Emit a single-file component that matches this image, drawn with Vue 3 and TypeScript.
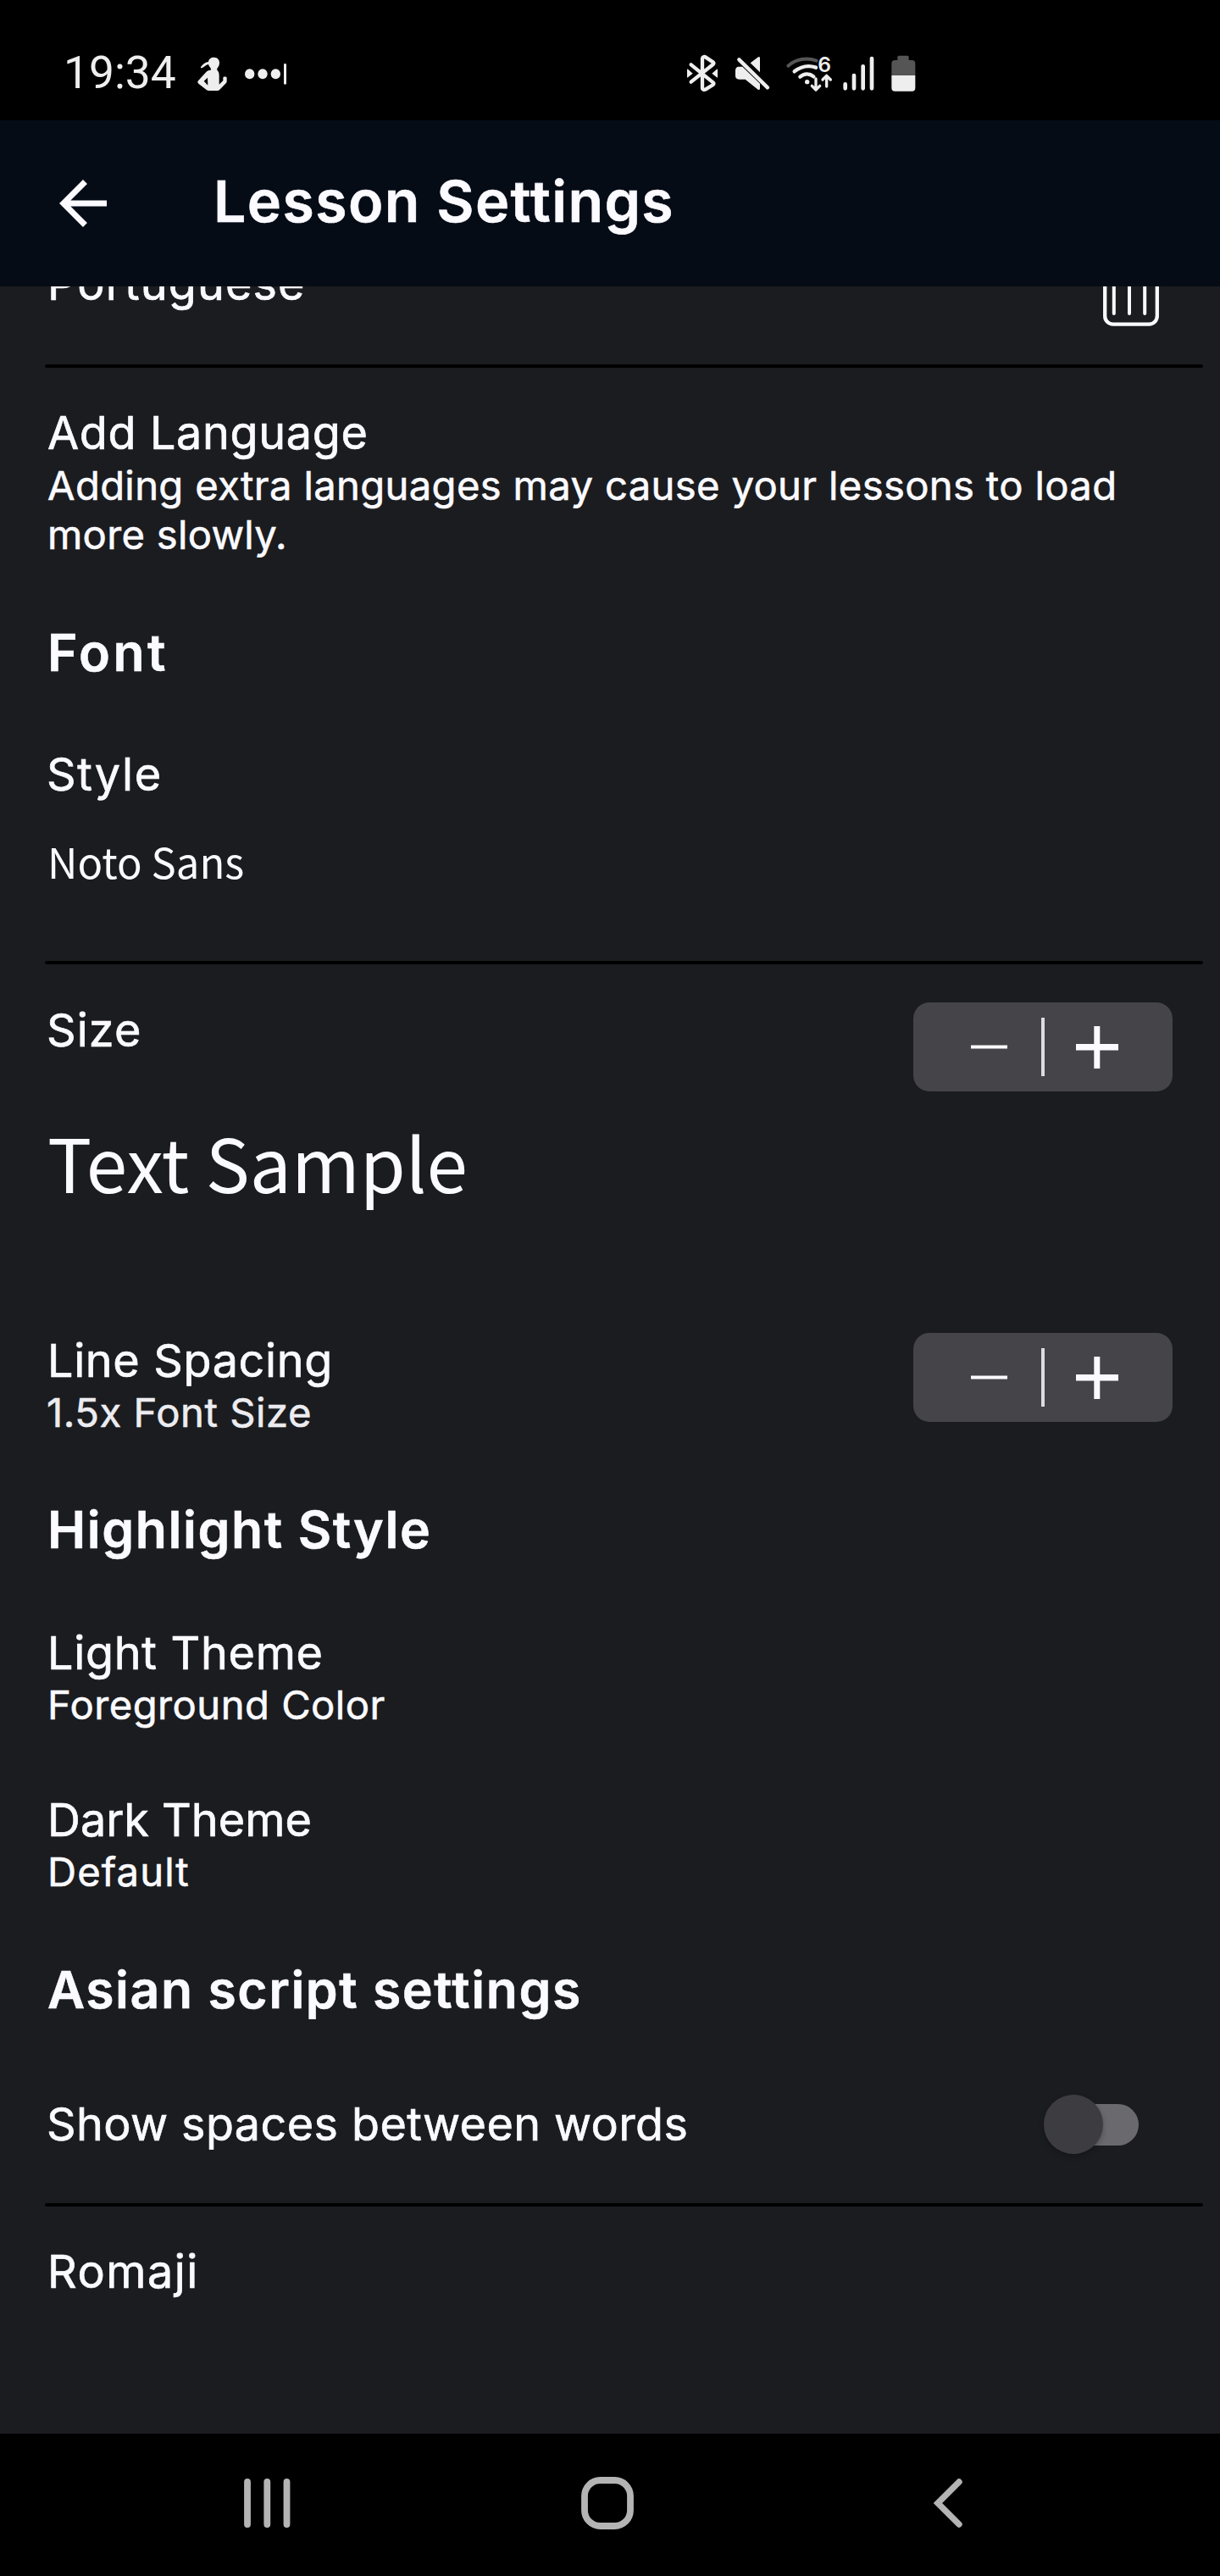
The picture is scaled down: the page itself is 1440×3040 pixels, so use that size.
<script setup lang="ts">
import { ref } from 'vue'

const showSpaces = ref(false)
const steppers = { size: 'Size', spacing: 'Line Spacing' }
</script>

<template>
  <div class="screen">
    <header class="status">
      <span class="time">19:34</span>
      <svg class="notif" viewBox="690 0 345 300" aria-hidden="true">
        <g fill="#eee">
          <path d="M757 83c12 0 20 8 20 19 0 8-3 14-7 19-2 3-2 6 0 9 5 4 6 11 6 19v30l14-14v-10c0-5 13-5 13 0v13c0 3-1 5-3 7l-22 22c-3 3-7 4-12 4h-22c-6 0-10-1-14-4l-27-21c-4-3-4-7-1-10l28-31c4-4 9-6 14-6 4-1 4-5 1-9-3-5-6-7-7-12-7-1-16 12-25 13-4 0-3-4 0-6 7-9 14-15 25-16 1-10 9-16 19-16z" />
          <ellipse cx="884" cy="142" rx="17" ry="18" />
          <ellipse cx="930" cy="142" rx="17" ry="18" />
          <ellipse cx="976" cy="142" rx="17" ry="18" />
          <rect x="1005" y="105" width="9" height="74" rx="4" />
        </g>
        <path d="M722 167l13-12 1 27z" fill="#000" />
      </svg>
      <svg class="system" viewBox="80 0 840 300" aria-hidden="true">
        <g fill="none" stroke="#eee" stroke-linecap="round" stroke-linejoin="round">
          <path d="M106 109l78 63c3 3 3 5 0 8l-26 16c-5 3-12 1-12-5V88c0-6 7-9 12-5l26 17c3 3 3 5 0 8l-78 62" stroke-width="13" />
          <path d="M276 91l101 99" stroke-width="13" />
          <path d="M472 133c22-17 50-23 76-14M492 152c15-13 33-13 48-1" stroke-width="13" />
          <path d="M450 113c27-24 65-31 100-18" stroke="#555" stroke-width="12" />
          <path d="M548 159v36M534 184l14 14 14-14" stroke-width="10" />
          <path d="M586 186v-36M572 162l14-14 14 14" stroke-width="10" />
          <path d="M652 178v15M683 147v46M715 115v78M746 87v106" stroke-width="14" />
        </g>
        <g fill="#eee">
          <path d="M92 127q-1-4 3-2l17 15-17 14q-4 2-3-2z" />
          <path d="M200 127q1-4-3-2l-17 15 17 14q4 2 3-2z" />
          <path d="M316 103l28-21q6-4 6 4v50z" />
          <path d="M275 116h13l62 60v17q0 8-7 4l-45-36h-22q-13 0-13-13v-18q0-14 12-14z" />
          <circle cx="517" cy="170" r="8" />
          <path d="M816 147h84v44q0 12-12 12h-60q-12 0-12-12z" />
        </g>
        <text x="555" y="136" class="wifi-gen">6</text>
        <path d="M816 147v-42q0-12 12-12h9V82q0-5 5-5h30q5 0 5 5v11h11q12 0 12 12v42z" fill="#555" />
      </svg>
    </header>

    <div class="appbar">
      <svg class="back" viewBox="0 0 24 24" aria-label="Back">
        <path d="M20 11H7.83l5.59-5.59L12 4l-8 8 8 8 1.41-1.41L7.83 13H20v-2z" fill="#fafaff" />
      </svg>
      <h1>Lesson Settings</h1>
    </div>

    <main>
      <div class="row language">
        <div class="label portuguese">Portuguese</div>
        <svg class="trash" viewBox="0 0 66 84" aria-label="Remove language">
          <g fill="none" stroke="#fafaff" stroke-linecap="round">
            <path d="M2.2 2v70a9.5 9.5 0 0 0 9.5 9.6h42.6a9.5 9.5 0 0 0 9.5-9.6V2" stroke-width="4.3" />
            <path d="M12.8 4v65M31 4v65M49.2 4v65" stroke-width="4" />
          </g>
        </svg>
      </div>
      <div class="divider d1"></div>

      <div class="item add">
        <div class="label add-label">Add Language</div>
        <div class="sub">
          <span class="s1">Adding extra languages may cause your lessons to load</span>
          <span class="s2"> more slowly.</span>
        </div>
      </div>

      <h2 class="h-font">Font</h2>
      <div class="label style">Style</div>
      <div class="font-name">Noto Sans</div>
      <div class="divider d2"></div>

      <div class="row size">
        <div class="label size-label">{{ steppers.size }}</div>
        <svg class="stepper" viewBox="0 0 306 105" aria-label="Font size">
          <rect width="306" height="105" rx="19" fill="#454549" />
          <path d="M68 50.5h43v4H68z" fill="#fafaff" />
          <path d="M151 18h4v69h-4z" fill="#dcdce1" />
          <path d="M192 49h21.3V28h7v21H242v7.5h-21.7V78h-7V56.5H192z" fill="#fafaff" />
        </svg>
      </div>
      <div class="sample">Text Sample</div>

      <div class="row spacing">
        <div class="texts">
          <div class="label line-label">{{ steppers.spacing }}</div>
          <div class="sub ratio">1.5x Font Size</div>
        </div>
        <svg class="stepper" viewBox="0 0 306 105" aria-label="Line spacing">
          <rect width="306" height="105" rx="19" fill="#454549" />
          <path d="M68 50.5h43v4H68z" fill="#fafaff" />
          <path d="M151 18h4v69h-4z" fill="#dcdce1" />
          <path d="M192 49h21.3V28h7v21H242v7.5h-21.7V78h-7V56.5H192z" fill="#fafaff" />
        </svg>
      </div>

      <h2 class="h-highlight">Highlight Style</h2>
      <div class="item light">
        <div class="label light-label">Light Theme</div>
        <div class="sub foreground">Foreground Color</div>
      </div>
      <div class="item dark">
        <div class="label dark-label">Dark Theme</div>
        <div class="sub default">Default</div>
      </div>

      <h2 class="h-asian">Asian script settings</h2>
      <div class="row spaces">
        <div class="label spaces-label">Show spaces between words</div>
        <button class="switch" role="switch" :aria-checked="showSpaces" @click="showSpaces = !showSpaces">
          <span class="knob"></span>
        </button>
      </div>
      <div class="divider d3"></div>
      <div class="label romaji">Romaji</div>
    </main>

    <nav>
      <svg class="recents" viewBox="0 0 55 58" aria-label="Recents">
        <path d="M4 4v50M27.3 4v50M50.5 4v50" stroke="#b4b4b4" stroke-width="7.8" stroke-linecap="round" />
      </svg>
      <svg class="home" viewBox="0 0 62 62" aria-label="Home">
        <rect x="4" y="4" width="54" height="54" rx="18.5" fill="none" stroke="#b4b4b4" stroke-width="7.8" />
      </svg>
      <svg class="prev" viewBox="0 0 35 58" aria-label="Back">
        <path d="M31 4L6 29l25 25" fill="none" stroke="#b4b4b4" stroke-width="7.4" stroke-linecap="round" />
      </svg>
    </nav>
  </div>
</template>

<style>
body {
  background: #1b1c1f;
}
</style>

<style scoped>
.screen {
  display: flex;
  flex-direction: column;
  width: 1440px;
  height: 3040px;
  overflow: hidden;
  background: #1b1c1f;
  color: #fafaff;
  font-family: Inter, "Liberation Sans", sans-serif;
}
.status {
  flex: none;
  display: flex;
  align-items: flex-start;
  height: 102px;
  padding-top: 40px;
  background: #000;
}
.time {
  width: 155px;
  margin-left: 75px;
  line-height: 93px;
  font-family: Roboto, sans-serif;
  font-size: 53.3px;
  color: #eee;
}
.notif {
  flex: none;
  width: 115px;
  height: 100px;
}
.system {
  flex: none;
  width: 280px;
  height: 100px;
  margin-left: 461.7px;
}
.wifi-gen {
  font-family: Inter, sans-serif;
  font-size: 74px;
  font-weight: 600;
  fill: #eee;
}
.appbar {
  flex: none;
  display: flex;
  align-items: center;
  height: 196px;
  background: #060c16;
}
.back {
  flex: none;
  width: 84px;
  height: 84px;
  margin-left: 56px;
}
h1 {
  margin: 0 0 6px 112px;
  font-size: 68px;
  line-height: 80px;
  font-weight: 600;
  letter-spacing: 1.4px;
  white-space: nowrap;
  -webkit-text-stroke: 0.6px currentColor;
}
main {
  flex: 1;
  min-height: 0;
  overflow: hidden;
  padding: 0 56px;
}
.row {
  display: flex;
  align-items: flex-start;
  justify-content: space-between;
}
.label {
  height: 66px;
  font-size: 53.92px;
  line-height: 67px;
  white-space: nowrap;
  -webkit-text-stroke: 0.7px currentColor;
}
.sub {
  font-size: 47.18px;
  line-height: 58px;
  -webkit-text-stroke: 0.6px currentColor;
}
h2 {
  margin: 0;
  font-size: 60.66px;
  line-height: 74px;
  font-weight: 600;
  white-space: nowrap;
  -webkit-text-stroke: 0.6px currentColor;
}
.divider {
  height: 4px;
  margin: 0 -36px 0 -3px;
  border-radius: 2px;
  background: #000;
}
.language {
  height: 66px;
  margin-top: -37px;
}
.portuguese { letter-spacing: 1.12px; }
.trash {
  flex: none;
  width: 66px;
  height: 84px;
  margin-right: 16px;
}
.d1 { margin-top: 63px; }
.add { margin-top: 43px; }
.add .sub {
  margin-top: 1px;
  margin-bottom: -1px;
}
.add-label { letter-spacing: 0.65px; }
.s1 { letter-spacing: 0.35px; }
.s2 { letter-spacing: 0.29px; }
.h-font {
  margin-top: 74px;
  letter-spacing: 3.4px;
}
.style {
  margin-top: 73px;
  margin-left: -1px;
  letter-spacing: 1.7px;
}
.font-name {
  margin-top: 35px;
  font-family: "Noto Sans CJK SC", sans-serif;
  font-size: 49px;
  line-height: 70px;
}
.d2 { margin-top: 83px; }
.size {
  height: 105px;
  margin-top: 45px;
}
.size-label {
  margin-top: -1px;
  margin-left: -1px;
  letter-spacing: 1.1px;
}
.stepper {
  flex: none;
  width: 306px;
  height: 105px;
}
.sample {
  margin-top: 18px;
  font-family: "Noto Sans CJK SC", sans-serif;
  font-size: 87.2px;
  line-height: 128px;
}
.spacing {
  height: 122px;
  margin-top: 139px;
}
.texts { margin-top: -1px; }
.line-label { letter-spacing: 0.65px; }
.ratio {
  margin-left: -1px;
  letter-spacing: 0.56px;
  color: #ececf1;
}
.h-highlight {
  margin-top: 73px;
  letter-spacing: 1.6px;
}
.light { margin-top: 75px; }
.light-label { letter-spacing: 0.7px; }
.foreground { letter-spacing: 0.48px; }
.dark { margin-top: 73px; }
.default { letter-spacing: 1.1px; }
.h-asian {
  margin-top: 73px;
  letter-spacing: 1.55px;
}
.spaces {
  align-items: center;
  height: 66px;
  margin-top: 88px;
}
.spaces-label {
  margin-left: -1px;
  line-height: 68px;
  letter-spacing: 0.4px;
}
.switch {
  display: flex;
  align-items: center;
  width: 98px;
  height: 49px;
  margin: 2px 40px 0 0;
  padding: 0;
  border: 0;
  border-radius: 25px;
  background: #6a6a6e;
}
.knob {
  flex: none;
  width: 70px;
  height: 70px;
  margin-left: -14px;
  border-radius: 50%;
  background: #3d3d41;
  box-shadow: 0 3px 6px rgba(0, 0, 0, 0.25);
}
.d3 { margin-top: 61px; }
.romaji {
  margin-top: 43px;
  line-height: 68px;
  letter-spacing: 1.5px;
}
nav {
  flex: none;
  display: flex;
  align-items: center;
  height: 168px;
  background: #000;
}
.recents {
  width: 55px;
  height: 58px;
  margin: 0 0 4px 287.5px;
}
.home {
  width: 62px;
  height: 62px;
  margin: 0 0 4px 343.5px;
}
.prev {
  width: 35px;
  height: 58px;
  margin: 0 0 4px 353px;
}
</style>
